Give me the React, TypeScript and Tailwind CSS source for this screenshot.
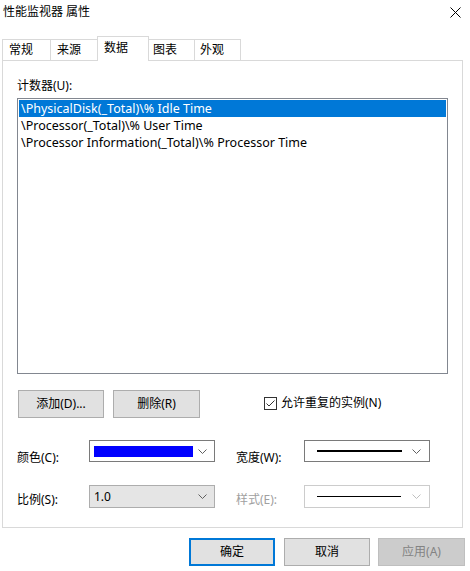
import React from "react";

const font = { fontFamily: '"Noto Sans", "Noto Sans CJK SC", sans-serif' };

function Chevron({ color = "#606060" }: { color?: string }) {
  return (
    <svg width="9" height="5" viewBox="0 0 9 5" className="shrink-0">
      <path d="M0.5 0.5 L4.5 4.5 L8.5 0.5" fill="none" stroke={color} strokeWidth="1" />
    </svg>
  );
}

export default function App() {
  return (
    <div className="w-[470px] h-[571px] bg-white text-[12px] text-black relative overflow-hidden" style={font}>
      {/* title bar */}
      <div className="h-[36px] flex items-start justify-between pl-[3px] pr-[9px] pt-[4px]">
        <span className="leading-[16px]">性能监视器 属性</span>
        <svg width="11" height="11" viewBox="0 0 11 11" className="mt-[3px]">
          <path d="M0.5 0.5 L10.5 10.5 M10.5 0.5 L0.5 10.5" stroke="#000" strokeWidth="1" />
        </svg>
      </div>

      {/* tabs */}
      <div className="flex items-end h-[24px] pl-[2px]">
        <div className="w-[48px] h-[21px] border-l border-t border-[#d9d9d9] flex items-center pl-[6px] leading-none">常规</div>
        <div className="w-[47px] h-[21px] border-l border-t border-[#d9d9d9] flex items-center pl-[6px] leading-none">来源</div>
        <div className="relative z-10 w-[52px] h-[25px] -mb-px bg-white border-l border-t border-r border-[#d9d9d9] flex items-start pt-[3px] pl-[6px] leading-[16px]">数据</div>
        <div className="w-[46px] h-[21px] border-t border-r border-[#d9d9d9] flex items-center pl-[4px] leading-none">图表</div>
        <div className="w-[46px] h-[21px] border-t border-r border-[#d9d9d9] flex items-center pl-[5px] leading-none">外观</div>
      </div>

      {/* panel */}
      <div className="ml-[2px] w-[461px] h-[468px] border border-[#d9d9d9] bg-white pl-[14px]">
        <div className="mt-[17px] leading-[16px]">计数器(U):</div>
        <div className="mt-[4px] w-[431px] h-[276px] border border-[#828790] p-px text-[12.5px]">
          <div className="h-[17px] bg-[#0078d7] text-white pl-[2px] leading-[17px]">\PhysicalDisk(_Total)\% Idle Time</div>
          <div className="h-[17px] pl-[2px] leading-[17px]">\Processor(_Total)\% User Time</div>
          <div className="h-[17px] pl-[2px] leading-[17px]">\Processor Information(_Total)\% Processor Time</div>
        </div>

        {/* add/remove row */}
        <div className="mt-[16px] flex items-center h-[28px]">
          <div className="ml-px w-[86px] h-[28px] bg-[#e1e1e1] border border-[#adadad] flex items-center justify-center">添加(D)...</div>
          <div className="ml-[9px] w-[87px] h-[28px] bg-[#e1e1e1] border border-[#adadad] flex items-center justify-center">删除(R)</div>
          <div className="ml-[64px] flex items-center mt-[-2px]">
            <div className="w-[13px] h-[13px] border border-[#333] flex items-center justify-center bg-white">
              <svg width="11" height="11" viewBox="0 0 11 11">
                <path d="M1.5 5.5 L4 8 L9.5 2.5" fill="none" stroke="#333" strokeWidth="1" />
              </svg>
            </div>
            <span className="ml-[4px] leading-[16px]">允许重复的实例(N)</span>
          </div>
        </div>

        {/* color / width row */}
        <div className="mt-[22px] flex h-[22px] relative">
          <span className="absolute left-0 top-[10px] leading-[16px]">颜色(C):</span>
          <div className="ml-[72px] w-[126px] h-[22px] border border-[#7a7a7a] bg-white flex items-center pl-[4px] pr-[7px]">
            <div className="w-[99px] h-[11px] bg-[#0000ff]" />
            <div className="flex-1" />
            <Chevron />
          </div>
          <span className="absolute left-[219px] top-[10px] leading-[16px]">宽度(W):</span>
          <div className="ml-[89px] w-[126px] h-[22px] border border-[#7a7a7a] bg-white flex items-center pl-[12px] pr-[8px]">
            <div className="w-[85px] h-[2px] bg-black" />
            <div className="flex-1" />
            <Chevron />
          </div>
        </div>

        {/* scale / style row */}
        <div className="mt-[23px] flex h-[23px] relative">
          <span className="absolute left-0 top-[7px] leading-[16px]">比例(S):</span>
          <div className="ml-[72px] w-[126px] h-[23px] border border-[#adadad] bg-[#e5e5e5] flex items-center pl-[4px] pr-[7px]">
            <span className="leading-[16px]">1.0</span>
            <div className="flex-1" />
            <Chevron />
          </div>
          <span className="absolute left-[219px] top-[7px] leading-[16px] text-[#a0a0a0]">样式(E):</span>
          <div className="ml-[89px] w-[126px] h-[23px] border border-[#cccccc] bg-white flex items-center pl-[12px] pr-[8px]">
            <div className="w-[84px] h-px bg-black" />
            <div className="flex-1" />
            <Chevron color="#bfbfbf" />
          </div>
        </div>
      </div>

      {/* bottom buttons */}
      <div className="mt-[10px] flex pl-[189px]">
        <div className="w-[86px] h-[28px] bg-[#e1e1e1] border-2 border-[#0078d7] flex items-center justify-center">确定</div>
        <div className="ml-[9px] w-[86px] h-[28px] bg-[#e1e1e1] border border-[#adadad] flex items-center justify-center">取消</div>
        <div className="ml-[8px] w-[87px] h-[28px] bg-[#cccccc] border border-[#bfbfbf] flex items-center justify-center text-[#838383]">应用(A)</div>
      </div>
    </div>
  );
}
